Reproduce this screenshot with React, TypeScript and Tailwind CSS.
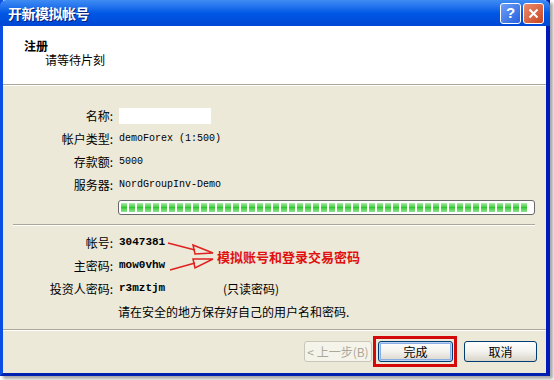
import {FC} from "react";

const cjk = "font-['Noto_Sans_CJK_SC','Noto_Sans',sans-serif]";
const mono = "font-['Liberation_Mono','Noto_Sans_CJK_SC',monospace]";

const Row: FC<{label: string; children?: React.ReactNode}> = ({label, children}) => (
    <div className="flex h-[23px] items-center">
        <div className="w-[112px] text-right pr-[2px]">{label}:</div>
        <div className="flex items-center pl-[4px]">{children}</div>
    </div>
);

const XpButton: FC<{label: string; width: string; disabled?: boolean; focused?: boolean}> = ({label, width, disabled, focused}) => (
    <div className={`relative ${width} h-[21px]`}>
        <div
            className={
                disabled
                    ? "w-full h-full flex items-center justify-center rounded-[3px] border border-[#c9c7ba] bg-[#f5f4ea] text-[#aca899] text-[12px]"
                    : `w-full h-full flex items-center justify-center rounded-[3px] border border-[#003c74] bg-linear-to-b from-[#ffffff] via-[#f3f2ee] to-[#d8d5c8] text-black text-[12px] ${focused ? "shadow-[inset_0_0_0_1px_#b9d1f5,inset_0_0_0_2px_#89ade4]" : ""}`
            }
        >
            {label}
        </div>
        {focused && <span className="absolute -left-[5px] -top-[5px] -right-[4px] -bottom-[5px] border-[3px] border-[#d40a0a]" />}
    </div>
);

export default function App() {
    const segments = Array.from({length: 51});

    return (
        <div className={`w-[554px] h-[380px] bg-white ${cjk}`}>
            <div className="relative w-[550px] h-[376px] flex flex-col bg-[#ece9d8] border-l-[3px] border-l-[#0a4ee4] border-r-[4px] border-r-[#0019b8] border-b-[3px] border-b-[#0021b0] shadow-[3px_3px_3px_rgba(0,0,0,0.35)] text-[12px] text-black">
                {/* title bar */}
                <div className="h-[26px] -ml-[3px] -mr-[4px] flex items-center justify-between pl-[8px] pr-[6px] rounded-t-[6px] bg-linear-to-b from-[#3f8cf3] via-[#0058e6] to-[#0046d4]">
                    <span className="text-white font-bold text-[14px] tracking-[-0.5px] [text-shadow:1px_1px_0_#0a1e78]">开新模拟帐号</span>
                    <div className="flex gap-[2px] mt-[1px]">
                        <div className="w-[21px] h-[21px] rounded-[3px] border border-white bg-linear-to-br from-[#6e9ef7] to-[#2660dd] flex items-center justify-center text-white font-bold text-[15px] font-['Liberation_Sans',sans-serif]">?</div>
                        <div className="w-[21px] h-[21px] rounded-[3px] border border-white bg-linear-to-br from-[#eb8b6b] to-[#c8431f] flex items-center justify-center">
                            <svg width="11" height="11" viewBox="0 0 11 11">
                                <path d="M1.5 1.5L9.5 9.5M9.5 1.5L1.5 9.5" stroke="white" strokeWidth="2" />
                            </svg>
                        </div>
                    </div>
                </div>

                {/* header */}
                <div className="h-[59px] bg-white border-b border-b-[#aca899] pt-[13px] leading-[14px]">
                    <div className="pl-[21px] font-bold">注册</div>
                    <div className="pl-[42px]">请等待片刻</div>
                </div>
                <div className="h-px bg-white" />

                {/* body */}
                <div className="flex flex-col pt-[18px] flex-1">
                    <Row label="名称">
                        <div className="w-[92px] h-[16px] bg-white" />
                    </Row>
                    <Row label="帐户类型">
                        <span className={`${mono} text-[10px]`}>demoForex (1:500)</span>
                    </Row>
                    <Row label="存款额">
                        <span className={`${mono} text-[10px]`}>5000</span>
                    </Row>
                    <Row label="服务器">
                        <span className={`${mono} text-[10px]`}>NordGroupInv-Demo</span>
                    </Row>
                    <div className="flex h-[23px] items-center pl-[115px]">
                        <div className="w-[417px] h-[15px] rounded-[3px] border border-[#686868] bg-white flex items-center gap-[2px] px-[2px] overflow-hidden">
                            {segments.map((_, i) => (
                                <div key={i} className="w-[6px] shrink-0 h-[9px] bg-linear-to-b from-[#a8eca8] via-[#2fc92f] to-[#8fe28f]" />
                            ))}
                        </div>
                    </div>

                    <div className="mt-[5px] ml-[10px] mr-[11px] h-px bg-[#aca899]" />
                    <div className="ml-[10px] mr-[11px] h-px bg-white" />

                    <div className="mt-[5px]">
                        <Row label="帐号">
                            <span className={`${mono} text-[11px] font-bold`}>3047381</span>
                        </Row>
                        <Row label="主密码">
                            <span className={`${mono} text-[11px] font-bold`}>mow0vhw</span>
                        </Row>
                        <Row label="投资人密码">
                            <span className={`${mono} text-[11px] font-bold w-[104px]`}>r3mztjm</span>
                            <span>(只读密码)</span>
                        </Row>
                        <div className="flex h-[23px] items-center pl-[115px]">请在安全的地方保存好自己的用户名和密码.</div>
                    </div>
                </div>

                {/* footer */}
                <div className="h-px bg-[#aca899]" />
                <div className="h-px bg-white" />
                <div className="h-[42px] flex items-start justify-end pt-[10px] pr-[9px]">
                    <XpButton label="< 上一步(B)" width="w-[68px]" disabled />
                    <div className="w-[6px]" />
                    <XpButton label="完成" width="w-[75px]" focused />
                    <div className="w-[11px]" />
                    <XpButton label="取消" width="w-[73px]" />
                </div>

                {/* annotation */}
                <svg className="absolute left-[-3px] top-0 pointer-events-none" width="554" height="380">
                    <path d="M168 243 L195 250" stroke="#e02020" strokeWidth="1.5" fill="none" />
                    <path d="M193 245 L213 253 L195 254 Z" stroke="#e02020" strokeWidth="1.5" fill="none" />
                    <path d="M170 270 L195 263" stroke="#e02020" strokeWidth="1.5" fill="none" />
                    <path d="M193 259 L213 259 L195 268 Z" stroke="#e02020" strokeWidth="1.5" fill="none" />
                </svg>
                <span className="absolute left-[214px] top-[249px] text-[13px] font-bold text-[#e01010] leading-[16px]">模拟账号和登录交易密码</span>
            </div>
        </div>
    );
}
